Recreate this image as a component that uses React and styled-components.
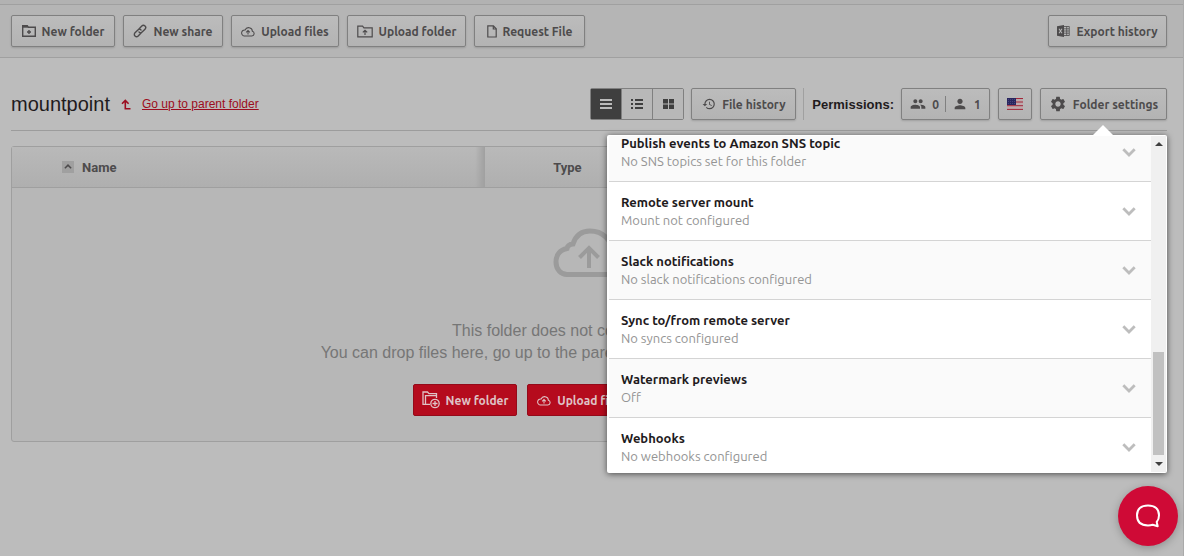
import React from "react";
import styled, { createGlobalStyle } from "styled-components";
import { MdPeople, MdPerson, MdHistory, MdSettings } from "react-icons/md";

const sections = [
    { title: "Publish events to Amazon SNS topic", status: "No SNS topics set for this folder" },
    { title: "Remote server mount", status: "Mount not configured" },
    { title: "Slack notifications", status: "No slack notifications configured" },
    { title: "Sync to/from remote server", status: "No syncs configured" },
    { title: "Watermark previews", status: "Off" },
    { title: "Webhooks", status: "No webhooks configured" },
];

function FolderPlusIcon() {
    return (
        <svg width="14" height="12" viewBox="0 0 14 12" fill="none" stroke="currentColor" strokeWidth="1.4">
            <path d="M.7 11.300V.7h4.600l1.200 1.600h6.800v9z" />
            <path d="M.7 1.700h5.300" strokeWidth="2" />
            <path d="M7 5v4M5 7h4" />
        </svg>
    );
}

function LinkIcon() {
    return (
        <svg width="14" height="14" viewBox="0 0 14 14" fill="none" stroke="currentColor" strokeWidth="1.400" strokeLinecap="round">
            <path d="M6.200 4.700 8.800 2a2.200 2.200 0 0 1 3.200 3.200L9.100 8.100a2.200 2.200 0 0 1-3.100 0" />
            <path d="M7.800 9.300 5.200 12A2.200 2.200 0 0 1 2 8.800l2.900-2.900a2.200 2.200 0 0 1 3.100 0" />
        </svg>
    );
}

function CloudIcon() {
    return (
        <svg width="14" height="11" viewBox="0 0 16 12" fill="none" stroke="currentColor" strokeWidth="1.200">
            <path d="M3.600 11.100h8.800a2.700 2.700 0 0 0 .6-5.300A4.300 4.300 0 0 0 4.700 4.300 3.400 3.400 0 0 0 3.600 11.100z" />
            <path d="M8 9.300V5M5.900 7 8 4.800 10.100 7" />
        </svg>
    );
}

function BigCloudIcon() {
    return (
        <svg width="72" height="50" viewBox="0 0 72 50" fill="none" stroke="currentColor" strokeWidth="5">
            <path d="M14 46.500h45a10.500 10.500 0 0 0 1-21C59 11 49 3 37 3c-8.500 0-14.500 5-17 13-4 .3-5.500 2-6 4.500C7 22 3 27 3 34c0 7 4.500 12.500 11 12.500z" />
            <path d="M36 40V21M26.500 29.500 36 20l9.500 9.500" strokeWidth="4" />
        </svg>
    );
}

function FolderUpIcon() {
    return (
        <svg width="16" height="13" viewBox="0 0 16 13" fill="none" stroke="currentColor" strokeWidth="1.200">
            <path d="M.8 11.800V1.200h4.800l1.300 1.600h8.300v9z" />
            <path d="M8 10V5.500M5.800 7.400 8 5.300l2.200 2.100" />
        </svg>
    );
}

function FileIcon() {
    return (
        <svg width="10" height="13" viewBox="0 0 10 13" fill="none" stroke="currentColor" strokeWidth="1.200">
            <path d="M.8 12V.8h5.600L9.200 3.800V12z" />
            <path d="M6.300 1v3h2.900" />
        </svg>
    );
}

function ExcelIcon() {
    return (
        <svg width="13" height="12" viewBox="0 0 13 12" fill="none">
            <path d="M0 1.300 7 0v12L0 10.700z" fill="currentColor" />
            <path d="m2 3.800 3 4.500M5 3.800 2 8.300" stroke="#b8b8b8" strokeWidth="1.100" />
            <path d="M7 1.500h5.300v9H7M7 3.800h5M7 6h5M7 8.200h5M9.700 1.500v9" stroke="currentColor" strokeWidth=".8" />
        </svg>
    );
}

function FolderAddIcon() {
    return (
        <svg width="18" height="18" viewBox="0 0 18 18" fill="none" stroke="currentColor" strokeWidth="1.300">
            <path d="M8 13.300H1V1h4.500L7 2.700h7.500V7M3.500 13V4.700h11" />
            <circle cx="13" cy="12.500" r="4.200" />
            <path d="M13 10v5M10.500 12.500h5" />
        </svg>
    );
}

function ChevronIcon({ width, stroke, up }) {
    return (
        <svg width={width} height={width * 9 / 14} viewBox="0 0 14 9" fill="none" stroke="currentColor" strokeWidth={stroke}>
            <path d={up ? "M1.500 7.500 7 2l5.500 5.500" : "M1.300 1.300 7 7l5.700-5.700"} />
        </svg>
    );
}

function FlagIcon() {
    return (
        <svg width="16" height="12" viewBox="0 0 16 12">
            <path d="M0 0h16v12H0z" fill="#bda9ac" />
            <path d="M0 .5h16M0 4h16M0 7.700h16M0 11.400h16" stroke="#a12639" strokeWidth="1" />
            <path d="M0 0h9v7H0z" fill="#29265f" />
            <path d="M1 1.500h7M1 3.500h7M1 5.500h7" stroke="#55528a" strokeWidth=".7" strokeDasharray="1 1" />
        </svg>
    );
}

export default function App() {
    return (
        <>
        <GlobalStyle />
        <Page>
            <Strip />

            <Toolbar>
                <Group>
                    <Button $width={104}><FolderPlusIcon />New folder</Button>
                    <Button $width={100}><LinkIcon />New share</Button>
                    <Button $width={108}><CloudIcon />Upload files</Button>
                    <Button $width={119}><FolderUpIcon />Upload folder</Button>
                    <Button $width={111}><FileIcon />Request File</Button>
                </Group>
                <Button $width={119}><ExcelIcon />Export history</Button>
            </Toolbar>

            <Main>
                <Heading>
                    <h1>mountpoint</h1>
                    <svg width="10" height="11" viewBox="0 0 10 11" fill="none" stroke="#9c0d20" strokeWidth="1.600">
                        <path d="M9.500 9.800H4.300V2M1 4.800 4.300 1.400l3.300 3.400" />
                    </svg>
                    <a href="#parent">Go up to parent folder</a>

                    <Controls>
                        <Views>
                            <ViewButton $active aria-label="List">
                                <svg width="12" height="10" viewBox="0 0 12 10"><path d="M0 0h12v2H0zM0 4h12v2H0zM0 8h12v2H0z" fill="currentColor" /></svg>
                            </ViewButton>
                            <ViewButton aria-label="Details">
                                <svg width="12" height="10" viewBox="0 0 12 10"><path d="M0 0h2v2H0zM4 0h8v2H4zM0 4h2v2H0zM4 4h8v2H4zM0 8h2v2H0zM4 8h8v2H4z" fill="currentColor" /></svg>
                            </ViewButton>
                            <ViewButton aria-label="Grid">
                                <svg width="11" height="10" viewBox="0 0 11 10"><path d="M0 0h5v4.500H0zM6 0h5v4.500H6zM0 5.500h5V10H0zM6 5.500h5V10H6z" fill="currentColor" /></svg>
                            </ViewButton>
                        </Views>
                        <Button $width={105}><MdHistory size={14} />File history</Button>
                        <Permissions>Permissions:</Permissions>
                        <Button $width={89}>
                            <MdPeople size={16} />0
                            <Divider />
                            <MdPerson size={16} />1
                        </Button>
                        <Button $width={34} aria-label="Region"><FlagIcon /></Button>
                        <Settings>
                            <Button $width={127}><MdSettings size={18} />Folder settings</Button>
                            <Popover>
                                <List>
                                    {sections.map(section =>
                                        <Item key={section.title}>
                                            <button>
                                                <span>
                                                    <strong>{section.title}</strong>
                                                    <small>{section.status}</small>
                                                </span>
                                                <ChevronIcon width={14} stroke={2.8} />
                                            </button>
                                        </Item>
                                    )}
                                </List>
                                <Scrollbar>
                                    <Arrow $up />
                                    <Thumb />
                                    <Arrow />
                                </Scrollbar>
                            </Popover>
                        </Settings>
                    </Controls>
                </Heading>

                <Files>
                    <thead>
                        <tr>
                            <th className="name"><Sort><i><ChevronIcon width={8} stroke={2.6} up /></i>Name</Sort></th>
                            <th className="type">Type</th>
                        </tr>
                    </thead>
                    <tbody>
                        <tr>
                            <td colSpan="2">
                                <Empty>
                                    <BigCloudIcon />
                                    <p>
                                        This folder does not contain any items.<br />
                                        You can drop files here, go up to the parent folder, or use the buttons below.
                                    </p>
                                    <Actions>
                                        <RedButton $width={104}><FolderAddIcon />New folder</RedButton>
                                        <RedButton $width={108}><CloudIcon />Upload files</RedButton>
                                        <RedButton $width={120}><FolderUpIcon />Upload folder</RedButton>
                                    </Actions>
                                </Empty>
                            </td>
                        </tr>
                    </tbody>
                </Files>
            </Main>

            <Chat aria-label="Open chat">
                <svg width="26" height="24" viewBox="0 0 26 24" fill="none" stroke="#fff" strokeWidth="2" strokeLinejoin="round">
                    <path d="M13 1.500c7 0 11 3.700 11 9.700 0 3-.8 5.200-2.300 6.800l1 4.200-5-1.400c-1.400.4-3 .6-4.700.6-7 0-11-3.700-11-10.200 0-6 4-9.700 11-9.700z" />
                </svg>
            </Chat>
        </Page>
        </>
    );
}

const ui = `Ubuntu, "Noto Sans", sans-serif`;

const GlobalStyle = createGlobalStyle`
    * {
        box-sizing: border-box;
    }
    body {
        margin: 0;
        background-color: #bcbcbc;
        font-family: "Liberation Sans", Arial, sans-serif;
        color: #1f1b1d;
    }
    button {
        font-family: inherit;
        cursor: pointer;
    }
`;

const Page = styled.div`
    min-height: 100vh;
    border-right: 1px solid #aaaaaa;
    overflow: hidden;
`;

const Strip = styled.div`
    height: 5px;
    background-color: #b2b2b2;
    border-bottom: 1px solid #a0a0a0;
`;

const Toolbar = styled.div`
    display: flex;
    justify-content: space-between;
    padding: 10px 16px 10px 11px;
    background-color: #b5b5b5;
    border-bottom: 1px solid #a0a0a0;
`;

const Group = styled.div`
    display: flex;
    gap: 8px;
`;

const Button = styled.button`
    display: flex;
    align-items: center;
    justify-content: center;
    gap: 6px;
    width: ${(props) => props.$width}px;
    height: 32px;
    padding: 0;
    background: linear-gradient(#bcbcbc, #b3b3b3);
    border: 1px solid #808080;
    border-radius: 2px;
    box-shadow: 0 1px 2px #00000026;

    color: #4d4b4c;
    font-family: ${ui};
    font-size: 12px;
    font-weight: 700;
    white-space: nowrap;
`;

const Main = styled.main`
    padding: 30px 16px 0 11px;
`;

const Heading = styled.div`
    display: flex;
    align-items: center;
    padding-bottom: 10px;
    border-bottom: 1px solid #9c9c9c;

    h1 {
        margin: 0 11px 0 0;
        font-size: 20px;
        font-weight: 400;
    }

    a {
        margin-left: 11px;
        color: #9c0d20;
        font-size: 12px;
    }
`;

const Controls = styled.div`
    display: flex;
    align-items: center;
    margin-left: auto;
`;

const Views = styled.div`
    display: flex;
    margin-right: 7px;
    border: 1px solid #808080;
    border-radius: 2px;
`;

const ViewButton = styled.button`
    display: flex;
    align-items: center;
    justify-content: center;
    width: 31px;
    height: 30px;
    padding: 0;
    border: 0;
    border-right: 1px solid #808080;
    background-color: ${(props) => props.$active ? "#3f3f3f" : "#b8b8b8"};
    color: ${(props) => props.$active ? "#bcbcbc" : "#3f3f3f"};

    &:last-child {
        width: 30px;
        border-right: 0;
    }
`;

const Permissions = styled.strong`
    display: flex;
    align-items: center;
    height: 32px;
    margin: 0 7px;
    padding-left: 8px;
    border-left: 1px solid #a0a0a0;
    font-size: 13px;

    & ~ * {
        margin-right: 8px;
    }
    & ~ :last-child {
        margin-right: 0;
    }
`;

const Divider = styled.span`
    width: 1px;
    height: 16px;
    background-color: #808080;
`;

const Settings = styled.div`
    position: relative;
`;

const Popover = styled.div`
    position: absolute;
    z-index: 2;
    top: 47px;
    right: 0;
    display: flex;
    width: 560px;
    height: 338px;
    padding: 1px 1px 1px 2px;
    background-color: #ffffff;
    border-radius: 2px;
    box-shadow: 0 1px 6px #00000099;

    &::before {
        content: "";
        position: absolute;
        top: -10px;
        right: 54px;
        border: 10px solid transparent;
        border-top: 0;
        border-bottom-color: #ffffff;
    }
`;

const List = styled.ul`
    display: flex;
    flex: 1;
    flex-direction: column;
    justify-content: flex-end;
    overflow: hidden;
    margin: 0;
    padding: 0;
    list-style: none;
`;

const Item = styled.li`
    flex-shrink: 0;
    border-bottom: 1px solid #d4d4d4;

    &:nth-child(odd) {
        background-color: #fafafa;
    }
    &:last-child {
        border-bottom: 0;
    }

    button {
        display: flex;
        align-items: center;
        justify-content: space-between;
        width: 100%;
        height: 58px;
        padding: 0 15px 0 12px;
        border: 0;
        background: none;
        color: #bdbdbd;
        font-family: ${ui};
        text-align: left;
    }

    &:last-child button {
        height: 54px;
        padding-top: 4px;
    }

    strong, small {
        display: block;
        font-size: 13px;
        line-height: 18px;
    }
    strong {
        color: #1f1b1d;
        font-weight: 700;
    }
    small {
        color: #949494;
    }
`;

const Scrollbar = styled.div`
    display: flex;
    flex-direction: column;
    align-items: center;
    width: 15px;
    padding: 6px 0;
    background-color: #f0f0f0;
`;

const Arrow = styled.span`
    border: 4px solid transparent;
    border-top: ${(props) => props.$up ? "0" : "4px solid #404040"};
    border-bottom: ${(props) => props.$up ? "4px solid #404040" : "0"};
`;

const Thumb = styled.span`
    width: 11px;
    height: 103px;
    margin: auto 0 7px;
    background-color: #c1c1c1;
`;

const Files = styled.table`
    width: 100%;
    margin-top: 15px;
    border: 1px solid #9f9f9f;
    border-radius: 3px;
    border-spacing: 0;
    background-color: #b7b7b7;
    table-layout: fixed;

    th {
        height: 41px;
        padding: 0;
        border-bottom: 1px solid #9f9f9f;
        background: linear-gradient(#b9b9b9, #afafaf);
        color: #4d4b4c;
        font-family: Roboto, sans-serif;
        font-size: 13px;
        font-weight: 700;
        text-align: left;
    }
    .name {
        width: 41%;
        padding-left: 50px;
        background: linear-gradient(to left, #a0a0a0, transparent 10px), linear-gradient(#b9b9b9, #afafaf);
    }
    .type {
        padding-left: 68px;
    }
    td {
        padding: 0;
    }
`;

const Sort = styled.div`
    display: flex;
    align-items: center;
    gap: 8px;

    i {
        display: flex;
        align-items: center;
        justify-content: center;
        width: 12px;
        height: 12px;
        background-color: #a0a0a0;
    }
`;

const Empty = styled.div`
    display: flex;
    flex-direction: column;
    align-items: center;
    padding: 40px 0 25px;
    color: #9b9b9b;

    p {
        margin: 42px 0 20px;
        color: #767676;
        font-size: 16px;
        line-height: 22px;
        text-align: center;
    }
`;

const Actions = styled.div`
    display: flex;
    gap: 10px;
`;

const RedButton = styled(Button)`
    background: #b50b1d;
    border-color: #940a19;
    box-shadow: none;
    color: #dfc3c6;
`;

const Chat = styled.button`
    position: fixed;
    z-index: 3;
    right: 6px;
    bottom: 10px;
    display: flex;
    align-items: center;
    justify-content: center;
    width: 60px;
    height: 60px;
    padding: 0;
    border: 0;
    border-radius: 50%;
    background-color: #cf0a36;
    box-shadow: 0 2px 8px #00000040;
`;
